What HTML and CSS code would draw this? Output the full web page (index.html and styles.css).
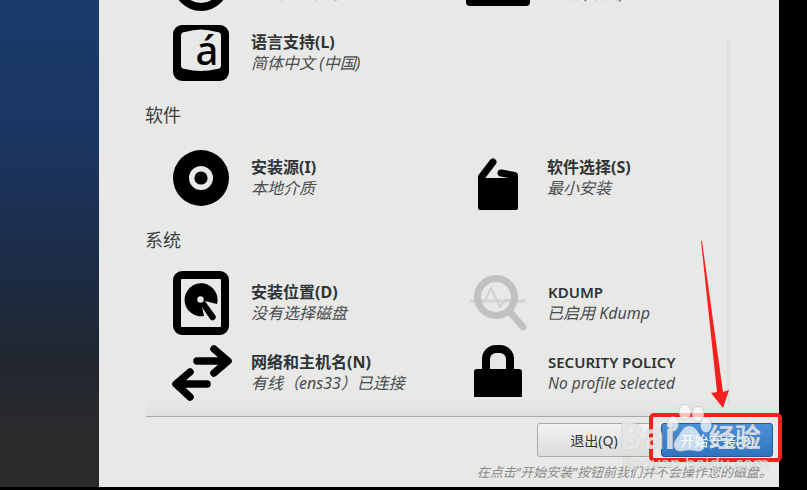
FILE: index.html
```html
<!DOCTYPE html>
<html lang="zh-CN">
<head>
    <meta charset="UTF-8">
    <meta name="viewport" content="width=device-width, initial-scale=1.0">
    <title>安装信息摘要</title>
    <link rel="stylesheet" href="styles.css">
</head>
<body>
    <div class="shell">
        <div class="sidebar"></div>

        <div class="main">
            <div class="hub">
                <div class="hubContent">
                    <div class="spokes">
                        <div class="spoke">
                            <svg class="icon" viewBox="0 0 56 64"><circle cx="28" cy="32" r="24" fill="none" stroke="#000" stroke-width="8"/></svg>
                            <div><div class="spokeTitle">日期和时间(T)</div><div class="spokeSub">亚洲/上海 时区</div></div>
                        </div>
                        <div class="spoke">
                            <svg class="icon" viewBox="0 0 56 64"><rect x="-3" y="10" width="64" height="45" rx="4" fill="#000"/></svg>
                            <div><div class="spokeTitle">键盘(K)</div><div class="spokeSub">汉语 (中国)</div></div>
                        </div>
                        <div class="spoke">
                            <svg class="icon" viewBox="0 0 56 64">
                                <rect y="4" width="56" height="56" rx="9" fill="#000"/>
                                <path d="M12 11 Q28 6 44 11 Q48 11 48 15 V44 Q48 48 44 48 Q28 52 12 48 Q8 48 8 44 V15 Q8 11 12 11Z" fill="#e8e8e7"/>
                                <text class="langGlyph" x="34" y="44" text-anchor="middle">á</text>
                            </svg>
                            <div><div class="spokeTitle">语言支持(L)</div><div class="spokeSub">简体中文 (中国)</div></div>
                        </div>
                    </div>

                    <div class="category">软件</div>
                    <div class="spokes">
                        <div class="spoke">
                            <svg class="icon" viewBox="0 0 56 64">
                                <circle cx="28" cy="32" r="28" fill="#000"/>
                                <circle cx="28" cy="32" r="9.3" fill="none" stroke="#e8e8e7" stroke-width="5.4"/>
                            </svg>
                            <div><div class="spokeTitle">安装源(I)</div><div class="spokeSub">本地介质</div></div>
                        </div>
                        <div class="spoke">
                            <svg class="icon" viewBox="0 0 56 64">
                                <path d="M9 32 H49 V62 a2 2 0 0 1 -2 2 H11 a2 2 0 0 1 -2 -2Z" fill="#000"/>
                                <path d="M12.5 31 L24 16 M32 27 L45.5 29.5 V33" stroke="#000" stroke-width="7" stroke-linecap="round" stroke-linejoin="round" fill="none"/>
                            </svg>
                            <div><div class="spokeTitle">软件选择(S)</div><div class="spokeSub">最小安装</div></div>
                        </div>
                    </div>

                    <div class="category">系统</div>
                    <div class="spokes">
                        <div class="spoke">
                            <svg class="icon" viewBox="0 0 56 64">
                                <rect x="4" y="4" width="48" height="56" rx="5" fill="none" stroke="#000" stroke-width="8"/>
                                <path d="M27.5 29 L44 33 A16.5 16.5 0 1 0 31 45 Z" fill="#000"/>
                                <path d="M25.5 31 L30 27.5 L42 44 a3 3 0 0 1 -5 4 Z" fill="#000"/>
                                <circle cx="27.5" cy="28.5" r="3.2" fill="#e8e8e7"/>
                            </svg>
                            <div><div class="spokeTitle">安装位置(D)</div><div class="spokeSub">没有选择磁盘</div></div>
                        </div>
                        <div class="spoke">
                            <svg class="icon" viewBox="0 0 56 64">
                                <path d="M1 30 H57" stroke="#d6d6d5" stroke-width="3.5" fill="none"/>
                                <path d="M9 30 H16 L22 17 L31 36 L36 29 H46" stroke="#d0d0cf" stroke-width="2" fill="none"/>
                                <circle cx="27" cy="26" r="18.5" fill="none" stroke="#c1c1c0" stroke-width="7"/>
                                <path d="M41 41 L54 56" stroke="#c1c1c0" stroke-width="7" stroke-linecap="round"/>
                            </svg>
                            <div><div class="spokeTitle titleLatin">KDUMP</div><div class="spokeSub">已启用 Kdump</div></div>
                        </div>
                        <div class="spoke">
                            <svg class="icon" viewBox="0 0 56 64">
                                <g fill="none" stroke="#000" stroke-width="7.5" stroke-linecap="round" stroke-linejoin="round">
                                    <path d="M24 20 H54 M41 8 L55 20 L41 32"/>
                                    <path d="M34 43 H4 M17 31 L3 43 L17 56"/>
                                </g>
                            </svg>
                            <div><div class="spokeTitle">网络和主机名(N)</div><div class="spokeSub">有线（ens33）已连接</div></div>
                        </div>
                        <div class="spoke">
                            <svg class="icon" viewBox="0 0 56 64">
                                <path d="M17 30 V18 a10 10 0 0 1 10 -10 h4 a10 10 0 0 1 10 10 V30" fill="none" stroke="#000" stroke-width="8"/>
                                <path d="M5 31 a3 3 0 0 1 3 -3 H50 a3 3 0 0 1 3 3 V56 H5Z" fill="#000"/>
                            </svg>
                            <div><div class="spokeTitle titleLatin">SECURITY POLICY</div><div class="spokeSub subLatin">No profile selected</div></div>
                        </div>
                    </div>
                </div>
                <div class="scrollThumb"></div>
                <div class="hubShade"></div>
            </div>

            <div class="actions">
                <div class="actionButtons">
                    <button class="btn btnQuit">退出(Q)</button>
                    <button class="btn btnBegin">开始安装(B)</button>
                </div>
                <div class="hint">在点击“开始安装”按钮前我们并不会操作您的磁盘。</div>
            </div>
        </div>
    </div>

    <!-- 截图上的标注和水印 -->
    <svg class="arrow" viewBox="0 0 807 490"><polygon points="701,241 702,241 723,392 729,390 723,408 711,393 717,392" fill="#f5201c"/></svg>
    <div class="redBox"></div>
    <svg class="paw" viewBox="0 0 60 60">
        <ellipse cx="25" cy="9" rx="6" ry="7.5"/>
        <ellipse cx="38" cy="11" rx="6" ry="7.5"/>
        <ellipse cx="13" cy="21" rx="5.5" ry="7.5"/>
        <ellipse cx="46" cy="22" rx="5.5" ry="7.5"/>
        <path d="M29 23 C36 23 38 30 43 36 C48 43 43 50 36 48 C32 47 27 47 23 48 C15 50 11 43 16 36 C21 30 23 23 29 23Z"/>
    </svg>
    <div class="wmBai">Bai</div>
    <div class="wmJingyan">经验</div>
    <div class="wmUrl">jingyan.baidu.com</div>
</body>
</html>
```

FILE: styles.css
```css
* {
    margin: 0;
    padding: 0;
    box-sizing: border-box;
}
body {
    height: 100vh;
    overflow: hidden;
    background: black;
    font-family: "Noto Sans", "Noto Sans CJK SC", sans-serif;
    color: #2e3436;
}
.shell {
    display: flex;
    width: 779px;
    height: 487px;
}
.sidebar {
    width: 99px;
    background: linear-gradient(to bottom, #1b3b6b 0%, #1a3560 30%, #1d2b42 58%, #22272f 75%, #2b2b2b 92%);
}
.main {
    flex: 1;
    display: flex;
    flex-direction: column;
    background: #e8e8e7;
}
.hub {
    position: relative;
    height: 417px;
    overflow: hidden;
    padding-left: 46px;
}
.hubContent {
    margin-top: -49px;
}
.hubShade {
    position: absolute;
    left: 47px;
    right: 0;
    bottom: 0;
    height: 20px;
    background: linear-gradient(to bottom, rgba(222, 222, 221, 0), #e0e0df);
}
.spokes {
    display: grid;
    grid-template-columns: 296px 296px;
    grid-auto-rows: 64px;
    row-gap: 6px;
    padding-left: 28px;
}
.spoke {
    display: flex;
    align-items: center;
    gap: 23px;
}
.icon {
    position: relative;
    z-index: 1;
    width: 56px;
    height: 64px;
    flex: none;
    overflow: visible;
}
.langGlyph {
    font-family: "Noto Sans", sans-serif;
    font-size: 40px;
    font-weight: 500;
    fill: #000;
}
.spokeTitle {
    margin-left: -1px;
    font-size: 16px;
    font-weight: 700;
    line-height: 21px;
}
.titleLatin {
    margin-left: 0;
    font-size: 15px;
    font-weight: 600;
}
.spokeSub {
    margin-left: -1px;
    font-size: 16px;
    font-style: italic;
    line-height: 21px;
    color: #484d4f;
}
.subLatin {
    margin-left: 0;
    font-size: 15.5px;
}
.category {
    margin: 18px 0 19px;
    font-size: 18px;
    line-height: 24px;
    color: #3a3f41;
}
.scrollThumb {
    position: absolute;
    top: 40px;
    left: 628px;
    width: 3px;
    height: 365px;
    border-radius: 2px;
    background: #dfdfde;
}
.actions {
    margin-left: 47px;
    margin-top: -1px;
    padding-top: 6px;
    border-top: 1px solid #a9a9a8;
    flex: 1;
    position: relative;
}
.actionButtons {
    display: flex;
    justify-content: flex-end;
    gap: 10px;
    padding-right: 6px;
}
.btn {
    height: 34px;
    font-family: inherit;
    font-size: 14px;
    border-radius: 3px;
}
.btnQuit {
    width: 114px;
    border: 1px solid #a8a8a6;
    background: linear-gradient(to bottom, #f2f2f1, #dcdcda);
    color: #2e3436;
}
.btnBegin {
    width: 112px;
    border: 1px solid #1f5a9e;
    background: linear-gradient(to bottom, #4a90d9, #2f74c0);
    color: #fff;
}
.hint {
    margin-top: 6px;
    padding-right: 7px;
    text-align: right;
    font-size: 13px;
    font-style: italic;
    line-height: 18px;
    color: #8a8c8c;
}

/* поверх скриншота: стрелка, рамка, водяной знак */
.arrow {
    position: absolute;
    top: 0;
    left: 0;
    width: 807px;
    height: 490px;
}
.redBox {
    position: absolute;
    top: 413px;
    left: 649px;
    width: 133px;
    height: 49px;
    border: 4px solid #f5201c;
    border-radius: 5px;
}
.paw {
    position: absolute;
    top: 403px;
    left: 660px;
    width: 60px;
    height: 60px;
    fill: rgba(255, 255, 255, 0.72);
    stroke: rgba(150, 150, 150, 0.45);
    stroke-width: 0.7;
}
.wmBai, .wmJingyan, .wmUrl {
    position: absolute;
    color: rgba(255, 255, 255, 0.72);
    text-shadow: 0 0 1px rgba(120, 120, 120, 0.6);
    white-space: nowrap;
}
.wmBai {
    top: 412px;
    left: 619px;
    font-size: 36px;
    font-weight: 700;
    line-height: 48px;
}
.wmJingyan {
    top: 420px;
    left: 709px;
    font-size: 26px;
    font-weight: 700;
    line-height: 34px;
}
.wmUrl {
    top: 452px;
    left: 622px;
    font-size: 17px;
    line-height: 22px;
}
```
